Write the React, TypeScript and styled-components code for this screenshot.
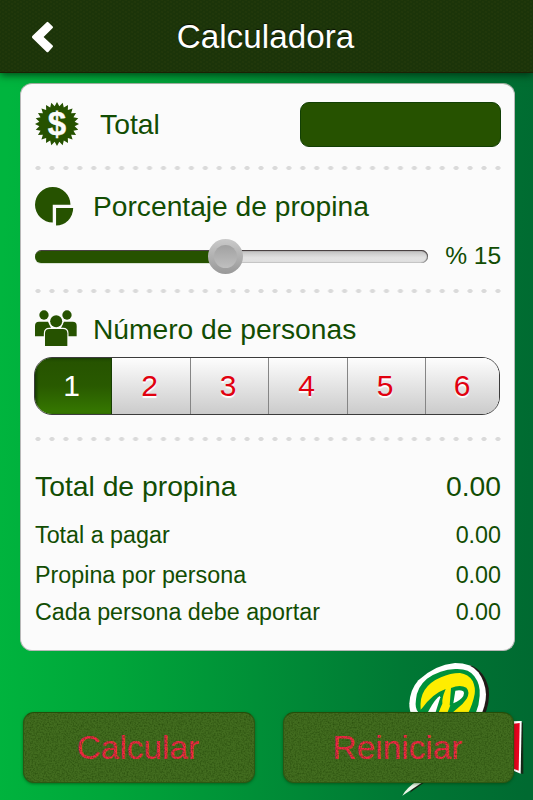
import React, { useState } from "react";
import styled, { createGlobalStyle, css } from "styled-components";

const GlobalStyle = createGlobalStyle`
  * { box-sizing: border-box; }
  body { margin: 0; overflow: hidden; }
  button, input { font-family: "Liberation Sans", Arial, sans-serif; }
`;

const Screen = styled.div`
  position: relative;
  display: flex;
  flex-direction: column;
  width: 533px;
  height: 800px;
  overflow: hidden;
  font-family: "Liberation Sans", Arial, sans-serif;
  color: #124d03;
  background: linear-gradient(92deg, #00b53e 2%, #00a63a 24%, #008f37 50%, #007834 76%, #006a31 99%);
`;

const Header = styled.header`
  display: grid;
  grid-template-columns: 87px 1fr 89px;
  align-items: center;
  flex: none;
  height: 73px;
  background:
    radial-gradient(ellipse at center, rgba(50, 66, 15, 0.28) 0 0.8px, transparent 1.8px) 0 0 / 6px 4px,
    radial-gradient(ellipse at center, rgba(50, 66, 15, 0.28) 0 0.8px, transparent 1.8px) 3px 2px / 6px 4px,
    #1b3409;
  border-bottom: 1px solid #1b2204;
  box-shadow: 0 2px 8px rgba(0, 30, 10, 0.75);
  z-index: 1;
`;

const BackButton = styled.button`
  display: flex;
  align-items: center;
  width: 86px;
  height: 72px;
  padding: 2px 0 0 31px;
  border: 0;
  background: none;
`;

const Title = styled.h1`
  margin: 0;
  padding-top: 1px;
  font-size: 33.2px;
  font-weight: 400;
  line-height: 72px;
  letter-spacing: 0.05px;
  text-align: center;
  color: #fff;
  text-shadow: 0 -1px 1px rgba(0, 0, 0, 0.7);
`;

const Card = styled.main`
  display: flex;
  flex-direction: column;
  flex: none;
  width: 495px;
  height: 568px;
  margin: 10px 0 0 20px;
  padding: 0 13px 0 14px;
  border: 1px solid #b8b8b8;
  border-top-color: #9fb09f;
  border-radius: 12px;
  background: #fbfbfb;
`;

const Divider = styled.div`
  flex: none;
  height: 4px;
  background: radial-gradient(ellipse 3px 2.2px at 3px 2px, #dadada 75%, transparent 100%) 0 0 / 13.94px 4px repeat-x;
`;

const TotalRow = styled.label`
  display: flex;
  align-items: center;
  height: 80px;
  margin-bottom: 2px;
`;

const TotalLabel = styled.span`
  flex: 1;
  margin-left: 21px;
  font-size: 28.3px;
  line-height: 36px;
`;

const AmountInput = styled.input`
  width: 201px;
  height: 45px;
  padding: 0 12px;
  border: 1px solid #123f05;
  border-radius: 9px;
  background: #265200;
  color: #fff;
  font-size: 26px;
  outline: 0;
`;

const Section = styled.section<{ $height: number; $top: number }>`
  display: flex;
  flex-direction: column;
  flex: none;
  height: ${(p) => p.$height}px;
  padding-top: ${(p) => p.$top}px;
`;

const SectionTitle = styled.h2`
  display: grid;
  grid-template-columns: 58px 1fr;
  align-items: center;
  height: 36px;
  margin: 0;
  font-size: 28.2px;
  font-weight: 400;
  line-height: 36px;
  white-space: nowrap;

  svg { display: block; }
`;

const SliderRow = styled.div`
  display: flex;
  align-items: center;
  justify-content: space-between;
  height: 36px;
  margin-top: 15px;
`;

const Track = styled.div`
  display: flex;
  align-items: center;
  width: 393px;
  height: 13px;
  margin-top: 1px;
  border-radius: 7px;
  background: linear-gradient(#b9b9b9, #d3d3d3 35%, #e1e1e1 60%, #e0e0e0);
  box-shadow: inset 0 1px 1px #3e3536, inset -1px 0 1px #777, inset 0 -1px 1px #ccc;
`;

const Fill = styled.div`
  height: 12px;
  border-radius: 6px 0 0 6px;
  background: #265200;
  box-shadow: 0 1px 0 #d9e3d5;
`;

const Thumb = styled.div`
  display: grid;
  place-items: center;
  flex: none;
  width: 35px;
  height: 35px;
  margin-left: -17px;
  border-radius: 50%;
  background: linear-gradient(#cacaca, #989898);

  &::after {
    content: "";
    width: 23px;
    height: 23px;
    border-radius: 50%;
    background: linear-gradient(#a1a1a1, #bfbfbf);
  }
`;

const Percent = styled.span`
  font-size: 24.6px;
  line-height: 34px;
  letter-spacing: -0.1px;
`;

const Segments = styled.div`
  display: grid;
  grid-template-columns: 77px 79px 78px 79px 78px 1fr;
  flex: none;
  width: 466px;
  height: 58px;
  margin: 10px 0 0 -1.5px;
  overflow: hidden;
  border: 1px solid #3c3c3c;
  border-radius: 18px;
`;

const Segment = styled.button<{ $active: boolean }>`
  padding: 0 2px 0 0;
  border: 0;
  border-right: 1px solid #858585;
  background: linear-gradient(#fdfdfd, #e5e5e5 48%, #cbcbcb);
  box-shadow: inset 0 1px 0 #fff;
  color: #e1000f;
  font-size: 30px;
  line-height: 54px;
  text-align: center;
  text-shadow: 0 2px 1px #fff;

  &:last-child { border-right: 0; padding-right: 0; }

  ${(p) =>
    p.$active &&
    css`
      border-right-color: #173e03;
      background: linear-gradient(#265200, #295a00 50%, #367900);
      box-shadow: inset 2px 1px 3px #163b04;
      color: #fff;
      text-shadow: none;
    `}
`;

const Results = styled.dl`
  display: flex;
  flex-direction: column;
  margin: 0;
  padding-top: 27px;
`;

const ResultRow = styled.div<{ $size: number; $height: number }>`
  display: flex;
  justify-content: space-between;
  height: ${(p) => p.$height}px;
  font-size: ${(p) => p.$size}px;
  line-height: 36px;

  dd { margin: 0; }
`;

const Brand = styled.svg`
  position: absolute;
  right: 0;
  bottom: 0;
`;

const Actions = styled.footer`
  display: flex;
  gap: 28px;
  margin: 60.5px 0 0 23px;
  z-index: 1;
`;

const ActionButton = styled.button<{ $width: number }>`
  position: relative;
  width: ${(p) => p.$width}px;
  height: 71px;
  padding: 0 2px 0 0;
  overflow: hidden;
  border: 1px solid #2c5713;
  border-top: 1px solid #244d08;
  border-radius: 11px;
  background: #426c1f;
  box-shadow: 0 1px 3px rgba(0, 60, 10, 0.55);
  color: #f72445;
  font-size: 33.4px;
  line-height: 70px;
  text-align: center;
`;

const Grain = styled.svg`
  position: absolute;
  inset: 0;
  width: 100%;
  height: 100%;
  pointer-events: none;
`;

const GREEN = "#265200";

const sealPoints = Array.from({ length: 48 }, (_, i) => {
  const r = i % 2 ? 17.8 : 22;
  const a = (i * Math.PI) / 24;
  return `${(22 + r * Math.sin(a)).toFixed(2)},${(22 - r * Math.cos(a)).toFixed(2)}`;
}).join(" ");

const BackIcon = () => (
  <svg width="23" height="33" viewBox="0 0 23 33">
    <path d="M15.7 1.2Q16.5 .5 17.3 1.2L21.7 5.5Q22.4 6.2 21.7 6.9L12.6 16L21.7 24.6Q22.4 25.4 21.7 26.1L17.3 31Q16.5 31.7 15.7 31L1.3 17Q.6 16 1.3 15Z" fill="#fff" />
  </svg>
);

const SealIcon = () => (
  <svg width="44" height="44" viewBox="0 0 44 44">
    <polygon points={sealPoints} fill={GREEN} />
    <text x="22" y="33" fill="#fbfbfb" stroke="#fbfbfb" strokeWidth="0.4" fontFamily="Liberation Sans, Arial, sans-serif" fontWeight="700" fontSize="33" textAnchor="middle">$</text>
  </svg>
);

const PieIcon = () => (
  <svg width="38.5" height="38.5" viewBox="45 35 115 115">
    <path d="M98 88H151A53 53 0 1 0 98 141Z" fill={GREEN} />
    <path d="M108 98H159A51 52 0 0 1 108 150Z" fill={GREEN} />
  </svg>
);

const PeopleIcon = () => (
  <svg width="42" height="36" viewBox="45 46 126 108" fill={GREEN} overflow="visible">
    <circle cx="72" cy="58" r="14" />
    <circle cx="141" cy="58" r="14" />
    <path d="M45 122V90Q45 78 57 78H84L92 95V122Z" />
    <path d="M170 122V90Q170 78 158 78H132L124 95V122Z" />
    <g stroke="#fbfbfb" strokeWidth="7" paintOrder="stroke">
      <path d="M75 151V113Q75 100 88 100H129Q142 100 142 113V151Z" />
      <circle cx="108.5" cy="77" r="18" />
    </g>
  </svg>
);

const BrandMark = () => (
  <Brand width="133" height="145" viewBox="0 0 399 435">
    <path d="M210 30Q254 47 266 100Q272 142 250 190H190V60Z" fill="#201b17" />
    <path d="M39 190Q27 168 28 145Q31 103 55 76Q105 29 165 24Q214 24 235 52Q256 80 258 118Q258 151 239 190Z" fill="#fff" />
    <path d="M55 172Q44 161 48 133Q51 96 81 71Q120 44 166 42Q207 40 223 64Q242 89 239 122Q238 150 226 178H74Z" fill="#00913a" />
    <path d="M62 164Q59 128 74 105Q91 80 123 67Q151 54 180 54Q205 57 218 78Q227 98 224 117Q219 146 202 180H112L127 146V107Z" fill="#ffed00" />
    <path d="M56 180L64 163Q96 116 137 102L131 118L114 180Z" fill="#00913a" />
    <path d="M80 178L96 150Q108 131 119 123L121 127L105 178Z" fill="#fff" />
    <path d="M149 151L153 99Q180 88 199 98Q211 111 200 131Q188 149 171 161L156 174H142L151 151Z" fill="#00913a" />
    <path d="M166 107Q181 103 190 109Q195 115 190 123Q182 136 160 145Z" fill="#fff" />
    <path d="M346 198L369 203L370 357L343 350Z" fill="#142817" />
    <path d="M335 199L365 198L362 356L335 345Z" fill="#fff" />
    <path d="M335 207L359 204L356 347L335 339Z" fill="#e5001c" />
    <path d="M55 373L79 379L61 391L29 413Z" fill="#171d14" />
    <path d="M54 376L70 380L7 422Q20 398 54 376Z" fill="#edf6e8" />
  </Brand>
);

const GrainOverlay = ({ id, seed }: { id: string; seed: number }) => (
  <Grain aria-hidden="true">
    <filter id={id} x="0" y="0" width="100%" height="100%" colorInterpolationFilters="sRGB">
      <feTurbulence type="fractalNoise" baseFrequency="0.63" numOctaves="2" seed={seed} />
      <feColorMatrix values="0 0 0 0 0.12  0 0 0 0 0.26  0 0 0 0 0.02  1.2 0 0 0 -0.45" />
    </filter>
    <rect width="100%" height="100%" filter={`url(#${id})`} />
  </Grain>
);

const results = [
  { label: "Total de propina", size: 28.3, height: 49 },
  { label: "Total a pagar", size: 23.3, height: 40 },
  { label: "Propina por persona", size: 23.3, height: 37 },
  { label: "Cada persona debe aportar", size: 23.3, height: 36 },
];

export default function App() {
  const [people, setPeople] = useState(1);
  const [total, setTotal] = useState("");
  const fillWidth = 190;

  return (
    <>
      <GlobalStyle />
      <Screen>
        <Header>
          <BackButton aria-label="Volver">
            <BackIcon />
          </BackButton>
          <Title>Calculadora</Title>
        </Header>
        <Card>
          <TotalRow>
            <SealIcon />
            <TotalLabel>Total</TotalLabel>
            <AmountInput value={total} onChange={(e) => setTotal(e.target.value)} />
          </TotalRow>
          <Divider />
          <Section $height={119} $top={17}>
            <SectionTitle>
              <PieIcon />
              Porcentaje de propina
            </SectionTitle>
            <SliderRow>
              <Track>
                <Fill style={{ width: fillWidth }} />
                <Thumb />
              </Track>
              <Percent>% 15</Percent>
            </SliderRow>
          </Section>
          <Divider />
          <Section $height={144} $top={18}>
            <SectionTitle>
              <PeopleIcon />
              Número de personas
            </SectionTitle>
            <Segments>
              {[1, 2, 3, 4, 5, 6].map((n) => (
                <Segment key={n} $active={n === people} onClick={() => setPeople(n)}>
                  {n}
                </Segment>
              ))}
            </Segments>
          </Section>
          <Divider />
          <Results>
            {results.map((r) => (
              <ResultRow key={r.label} $size={r.size} $height={r.height}>
                <dt>{r.label}</dt>
                <dd>0.00</dd>
              </ResultRow>
            ))}
          </Results>
        </Card>
        <BrandMark />
        <Actions>
          <ActionButton $width={232}>
            Calcular
            <GrainOverlay id="grain-calc" seed={3} />
          </ActionButton>
          <ActionButton $width={231}>
            Reiniciar
            <GrainOverlay id="grain-reset" seed={8} />
          </ActionButton>
        </Actions>
      </Screen>
    </>
  );
}
